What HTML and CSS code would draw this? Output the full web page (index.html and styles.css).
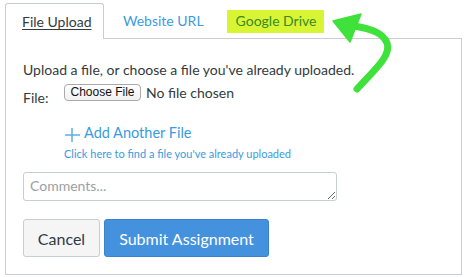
FILE: index.html
```html
<!DOCTYPE html>
<html lang="en">
<head>
<meta charset="utf-8">
<title>Submit Assignment</title>
<link rel="stylesheet" href="styles.css">
</head>
<body>
<div class="wrap">
  <div class="tabs">
    <div class="tab tab-active"><span class="tab-label">File Upload</span></div>
    <div class="tab tab-link">Website URL</div>
    <div class="tab tab-link tab-gdrive"><span class="highlight">Google Drive</span></div>
  </div>
  <div class="panel">
    <p class="intro">Upload a file, or choose a file you've already uploaded.</p>
    <div class="file-row">
      <span class="file-label">File:</span>
      <button class="choose-btn" type="button">Choose File</button>
      <span class="no-file">No file chosen</span>
    </div>
    <div class="add-row">
      <svg class="plus" width="16" height="16" viewBox="0 0 16 16" aria-hidden="true">
        <path d="M8 1v14M1 8h15" stroke="#5aaee6" stroke-width="1.5" fill="none"/>
      </svg>
      <span class="add-link">Add Another File</span>
    </div>
    <div class="find-link">Click here to find a file you've already uploaded</div>
    <textarea class="comments" placeholder="Comments..."></textarea>
    <div class="actions">
      <button class="btn btn-cancel" type="button">Cancel</button>
      <button class="btn btn-submit" type="button">Submit Assignment</button>
    </div>
  </div>
  <svg class="arrow" width="465" height="277" viewBox="0 0 465 277" aria-hidden="true">
    <path d="M357 89 C 372 72, 392 56, 387 43 C 383 33, 372 29, 354 26" stroke="#3ee23a" stroke-width="7" fill="none" stroke-linecap="round"/>
    <path d="M333 21 L361 14 L350 42 Z" fill="#3ee23a" stroke="#3ee23a" stroke-width="1.5" stroke-linejoin="round"/>
  </svg>
</div>
</body>
</html>
```
FILE: styles.css
```css
* { box-sizing: border-box; }
html, body { margin: 0; padding: 0; background: #fff; }
body {
  font-family: Lato, "Noto Sans", sans-serif;
  font-size: 14px;
  line-height: 20px;
  color: #333b40;
}
.wrap {
  position: relative;
  width: 465px;
  height: 277px;
  padding: 3px 0 0 5px;
}
.tabs {
  display: flex;
  align-items: flex-start;
  width: 457px;
  border-bottom: 1px solid #c7cdd1;
  height: 36px;
}
.tab {
  height: 35px;
  padding-top: 8px;
  white-space: nowrap;
}
.tab-active {
  width: 99px;
  padding-left: 16px;
  border: 1px solid #c7cdd1;
  border-bottom: none;
  border-radius: 3px 3px 0 0;
  background: #fff;
  height: 36px;
}
.tab-label { text-decoration: underline; text-underline-offset: 2px; color: #333b40; }
.tab-link { color: #3a9be0; margin-left: 19px; }
.tab-gdrive { margin-left: 23px; padding-top: 7px; }
.highlight {
  display: inline-block;
  background: #d8f534;
  color: #3a8a25;
  padding: 1px 7px 2px 9px;
  line-height: 20px;
}
.panel {
  width: 457px;
  height: 236px;
  border: 1px solid #c7cdd1;
  border-top: none;
  padding: 21px 17px 15px 17px;
}
.intro { margin: 0; }
.file-row {
  display: flex;
  align-items: flex-start;
  margin-top: 4px;
}
.file-label {
  width: 41px;
  padding-top: 4px;
}
.choose-btn {
  height: 17px;
  width: 77px;
  padding: 0;
  font-family: "Liberation Sans", Arial, sans-serif;
  font-size: 12px;
  line-height: 15px;
  color: #111;
  background: linear-gradient(#ffffff, #f1f1f1);
  border: 1px solid #a9a9a9;
  border-radius: 4px;
}
.no-file {
  margin-left: 5px;
  line-height: 17px;
  color: #333b40;
}
.add-row {
  display: flex;
  align-items: center;
  margin: 15px 0 0 41px;
  color: #3a9be0;
}
.plus { margin-right: 4px; margin-top: 4px; }
.add-link { font-size: 14.5px; }
.find-link {
  margin: 4px 0 0 41px;
  font-size: 11px;
  line-height: 14px;
  color: #3a9be0;
}
.comments {
  display: block;
  margin-top: 11px;
  width: 314px;
  height: 29px;
  border: 1px solid #c7cdd1;
  border-radius: 3px;
  padding: 3px 6px;
  font-family: Lato, "Noto Sans", sans-serif;
  font-size: 14px;
  line-height: 20px;
  color: #333b40;
}
.comments::placeholder { color: #9a9fa3; }
.actions {
  display: flex;
  gap: 4px;
  margin-top: 18px;
}
.btn {
  height: 38px;
  padding: 0;
  font-family: Lato, "Noto Sans", sans-serif;
  font-size: 16px;
  border-radius: 3px;
  white-space: nowrap;
}
.btn-cancel {
  width: 77px;
  background: #f5f5f5;
  border: 1px solid #c7cdd1;
  color: #2d3b45;
}
.btn-submit {
  width: 165px;
  background: #4492de;
  border: 1px solid #3a82c9;
  color: #fff;
}
.arrow {
  position: absolute;
  left: 0;
  top: 0;
  pointer-events: none;
}
```
